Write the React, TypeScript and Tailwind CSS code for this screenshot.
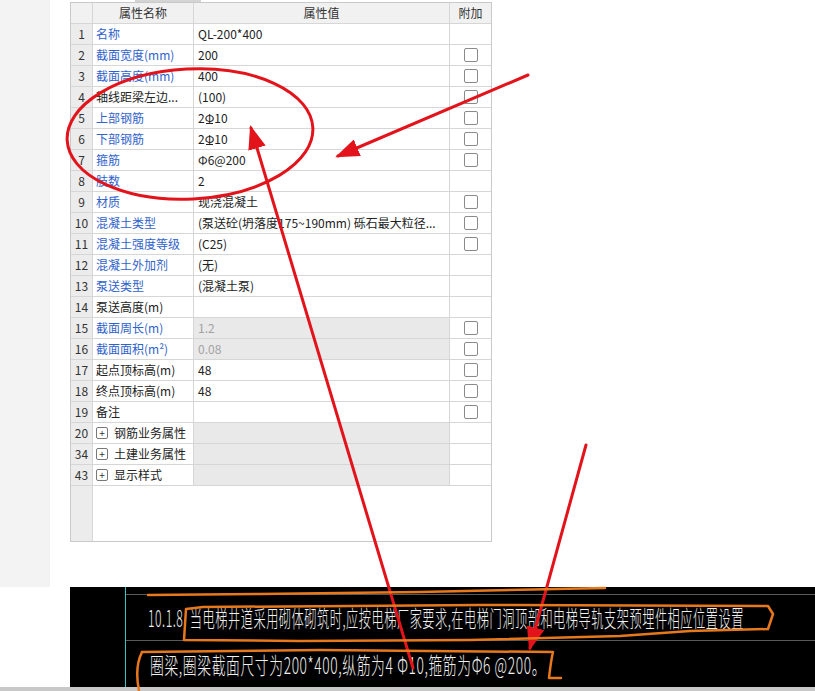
import React from 'react';

type Row = {
  no: string;
  name: string;
  value?: React.ReactNode;
  blue?: boolean;
  check?: boolean;
  disabled?: boolean;
  group?: boolean;
};

// HRB400 钢筋符号：Φ 下加一横
function Hrb() {
  return (
    <span className="relative inline-block leading-none">
      Φ
      <span className="absolute left-[1px] right-[1px] bottom-[0px] h-[1px] bg-[#222]" />
    </span>
  );
}

const rows: Row[] = [
  { no: '1', name: '名称', value: 'QL-200*400', blue: true },
  { no: '2', name: '截面宽度(mm)', value: '200', blue: true, check: true },
  { no: '3', name: '截面高度(mm)', value: '400', blue: true, check: true },
  { no: '4', name: '轴线距梁左边...', value: '(100)', check: true },
  { no: '5', name: '上部钢筋', value: <>2<Hrb />10</>, blue: true, check: true },
  { no: '6', name: '下部钢筋', value: <>2<Hrb />10</>, blue: true, check: true },
  { no: '7', name: '箍筋', value: 'Φ6@200', blue: true, check: true },
  { no: '8', name: '肢数', value: '2', blue: true },
  { no: '9', name: '材质', value: '现浇混凝土', blue: true, check: true },
  { no: '10', name: '混凝土类型', value: '(泵送砼(坍落度175~190mm) 砾石最大粒径...', blue: true, check: true },
  { no: '11', name: '混凝土强度等级', value: '(C25)', blue: true, check: true },
  { no: '12', name: '混凝土外加剂', value: '(无)', blue: true },
  { no: '13', name: '泵送类型', value: '(混凝土泵)', blue: true },
  { no: '14', name: '泵送高度(m)', value: '' },
  { no: '15', name: '截面周长(m)', value: '1.2', blue: true, check: true, disabled: true },
  { no: '16', name: '截面面积(m²)', value: '0.08', blue: true, check: true, disabled: true },
  { no: '17', name: '起点顶标高(m)', value: '48', check: true },
  { no: '18', name: '终点顶标高(m)', value: '48', check: true },
  { no: '19', name: '备注', value: '', check: true },
  { no: '20', name: '钢筋业务属性', group: true },
  { no: '34', name: '土建业务属性', group: true },
  { no: '43', name: '显示样式', group: true },
];

function Checkbox() {
  return <div className="w-[14px] h-[14px] rounded-[2px] border border-[#8a8a8a] bg-white" />;
}

function PropTable() {
  return (
    <div className="w-[422px] border border-[#c9c9c9] bg-white text-[12px] text-[#222]">
      {/* header */}
      <div className="flex h-[21px] bg-[#f1f1f1] border-b border-[#d6d6d6] text-[#333]">
        <div className="w-[22px] border-r border-[#d6d6d6]" />
        <div className="w-[101px] border-r border-[#d6d6d6] flex items-center justify-center">属性名称</div>
        <div className="w-[256px] border-r border-[#d6d6d6] flex items-center justify-center">属性值</div>
        <div className="flex-1 flex items-center justify-center">附加</div>
      </div>

      {rows.map((r) => (
        <div key={r.no} className="flex h-[21px] border-b border-[#d6d6d6]">
          <div className="w-[22px] border-r border-[#d6d6d6] bg-[#ececec] flex items-center justify-center text-[#333]">
            {r.no}
          </div>
          <div
            className={`w-[101px] border-r border-[#d6d6d6] flex items-center pl-[3px] whitespace-nowrap overflow-hidden ${
              r.blue ? 'text-[#2f62cc]' : 'text-[#222]'
            }`}
          >
            {r.group ? (
              <>
                <span className="w-[12px] h-[12px] border border-[#777] rounded-[2px] flex items-center justify-center text-[10px] leading-none mr-[6px] text-[#333]">
                  +
                </span>
                {r.name}
              </>
            ) : (
              r.name
            )}
          </div>
          <div
            className={`w-[256px] border-r border-[#d6d6d6] flex items-center pl-[4px] whitespace-nowrap overflow-hidden ${
              r.disabled || r.group ? 'bg-[#e9e9e9]' : ''
            } ${r.disabled ? 'text-[#a3a3a3]' : ''}`}
          >
            {r.value}
          </div>
          <div className="flex-1 flex items-center justify-center">{r.check && <Checkbox />}</div>
        </div>
      ))}

      {/* empty area */}
      <div className="flex h-[55px]">
        <div className="w-[22px] border-r border-[#d6d6d6] bg-[#ececec]" />
        <div className="flex-1" />
      </div>
    </div>
  );
}

function Annotations() {
  return (
    <svg className="absolute inset-0 pointer-events-none" width={815} height={691} viewBox="0 0 815 691">
      <defs>
        <marker id="head" markerWidth="8" markerHeight="6" refX="7" refY="3" orient="auto" markerUnits="strokeWidth">
          <path d="M0 0 L8 3 L0 6 z" fill="#e3131b" />
        </marker>
      </defs>
      <g fill="none" stroke="#e3131b" strokeWidth={3} strokeLinecap="round">
        <ellipse cx={190} cy={134} rx={123} ry={65} transform="rotate(-3 190 134)" />
        <line x1={528} y1={75} x2={338} y2={156} markerEnd="url(#head)" />
        <line x1={413} y1={668} x2={251} y2={128} markerEnd="url(#head)" />
        <line x1={586} y1={445} x2={530} y2={648} markerEnd="url(#head)" />
      </g>
      <g fill="none" stroke="#e8781c" strokeWidth={2.5} strokeLinejoin="round" strokeLinecap="round">
        <path d="M148 595 L260 594 L420 592 L605 588" />
        <path d="M203 607 L186 609 L184 640 L300 641 L470 640 L620 636 L690 631 L768 629 L773 614 L768 606 L480 605 L203 607" />
        <path d="M142 652 C137 662 136 676 139 691" />
        <path d="M142 652 L320 650 L553 652 C551 660 550 670 549 678 L561 678" />
      </g>
    </svg>
  );
}

export default function App() {
  return (
    <div
      className="relative w-[815px] h-[691px] bg-white overflow-hidden flex flex-col"
      style={{ fontFamily: '"Noto Sans CJK SC", "Noto Sans", sans-serif' }}
    >
      {/* upper area */}
      <div className="flex h-[587px] shrink-0">
        <div className="w-[50px] shrink-0 bg-[#f3f3f3]" />
        <div className="flex-1 min-w-0 flex flex-col">
          <div className="h-[2px] flex">
            <div className="ml-[85px] w-[66px] bg-[#d4d4d4]" />
          </div>
          <div className="pl-[20px]">
            <PropTable />
          </div>
        </div>
      </div>

      {/* CAD drawing strip */}
      <div className="flex h-[100px] shrink-0">
        <div className="w-[70px] shrink-0 bg-white" />
        <div className="w-[55px] shrink-0 bg-black" />
        <div className="flex-1 min-w-0 overflow-hidden bg-black border-l border-[#35c6c6] flex flex-col text-[#f0f0f0] font-extralight">
          <div className="h-[8px] border-b border-[#5a5a5a]" />
          <div className="h-[46px] border-b border-[#5a5a5a] flex items-center pl-[22px] whitespace-nowrap">
            <span className="inline-block origin-left scale-x-[0.53] text-[23px] leading-none tracking-[1px]">
              10.1.8&nbsp;&nbsp;当电梯井道采用砌体砌筑时,应按电梯厂家要求,在电梯门洞顶部和电梯导轨支架预埋件相应位置设置
            </span>
          </div>
          <div className="flex-1 flex items-center pl-[24px] whitespace-nowrap">
            <span className="inline-block origin-left scale-x-[0.6] text-[23px] leading-none tracking-[1px]">
              圈梁,圈梁截面尺寸为200*400,纵筋为4 Φ10,箍筋为Φ6 @200。
            </span>
          </div>
        </div>
      </div>
      <div className="flex-1 bg-[#c8c8c8]" />

      <Annotations />
    </div>
  );
}
